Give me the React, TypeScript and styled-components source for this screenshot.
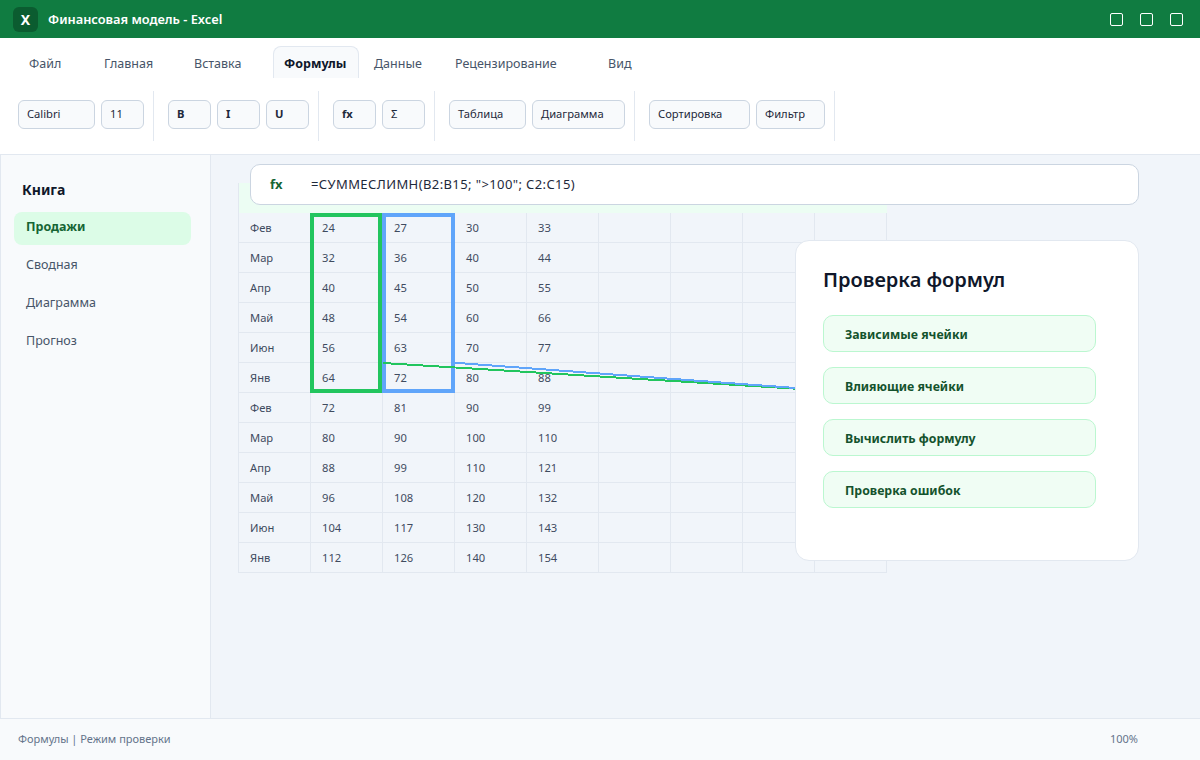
import React from 'react';
import styled, { createGlobalStyle } from 'styled-components';

const GlobalStyle = createGlobalStyle`
  html, body {
    margin: 0;
    padding: 0;
    height: 100%;
    overflow: hidden;
    font-family: "Noto Sans", "Open Sans", sans-serif;
  }
  * { box-sizing: border-box; }
`;

const Window = styled.div`
  width: 1200px;
  height: 760px;
  display: flex;
  flex-direction: column;
  background: #f1f5fa;
`;

const TitleBar = styled.header`
  height: 38px;
  flex: none;
  display: flex;
  align-items: center;
  padding: 0 17px 0 13px;
  background: #107c41;
  color: #fff;
`;

const Logo = styled.div`
  width: 25px;
  height: 25px;
  margin-right: 10px;
  display: flex;
  align-items: center;
  justify-content: center;
  border-radius: 6px;
  background: #0b5c30;
  font-size: 14px;
  font-weight: 700;
`;

const AppTitle = styled.div`
  font-size: 12.8px;
  font-weight: 600;
  flex: 1;
`;

const WindowControls = styled.div`
  display: flex;
  gap: 17px;
`;

const WindowControl = styled.div`
  width: 13px;
  height: 13px;
  border: 1px solid #fff;
  border-radius: 2px;
`;

const TabBar = styled.nav`
  height: 40px;
  flex: none;
  display: flex;
  align-items: flex-end;
  padding-left: 18px;
  background: #fff;
`;

const Tab = styled.div<{ $active?: boolean; $width: number }>`
  width: ${p => p.$width}px;
  height: 32px;
  margin-right: ${p => (p.$active ? 4 : 0)}px;
  padding: 1px 0 0 10px;
  display: flex;
  align-items: center;
  font-size: 12.5px;
  font-weight: ${p => (p.$active ? 700 : 400)};
  color: ${p => (p.$active ? '#0f172a' : '#475569')};
  background: ${p => (p.$active ? '#f8fafc' : 'transparent')};
  border: 1px solid ${p => (p.$active ? '#e2e8f0' : 'transparent')};
  border-bottom: none;
  border-radius: 8px 8px 0 0;
`;

const Ribbon = styled.div`
  height: 77px;
  flex: none;
  display: flex;
  align-items: flex-start;
  padding: 13px 0 0 18px;
  background: #fff;
  border-bottom: 1px solid #e2e8f0;
`;

const RibbonGroup = styled.div`
  height: 50px;
  display: flex;
  align-items: flex-start;
  gap: 6px;
  padding: 9px 9px 0 0;
  margin-right: 14px;
  border-right: 1px solid #e2e8f0;
`;

const RibbonButton = styled.div<{ $width: number; $bold?: boolean }>`
  width: ${p => p.$width}px;
  height: 29px;
  padding: 0 0 3px 8px;
  display: flex;
  align-items: center;
  font-size: 11.2px;
  font-weight: ${p => (p.$bold ? 700 : 400)};
  color: #1e293b;
  background: #f8fafc;
  border: 1px solid #cbd5e1;
  border-radius: 6px;
`;

const Body = styled.div`
  flex: 1;
  min-height: 0;
  display: flex;
`;

const Sidebar = styled.aside`
  width: 211px;
  flex: none;
  padding: 24px 19px 0 13px;
  background: #f8fafc;
  border-left: 1px solid #e2e8f0;
  border-right: 1px solid #e2e8f0;
`;

const SidebarTitle = styled.h2`
  margin: 0 0 12px 8px;
  height: 21px;
  line-height: 21px;
  font-size: 14px;
  font-weight: 700;
  color: #0f172a;
`;

const SidebarList = styled.div`
  display: flex;
  flex-direction: column;
  gap: 5px;
`;

const SidebarItem = styled.div<{ $active?: boolean }>`
  height: 33px;
  padding: 6px 12px 0;
  line-height: 18px;
  font-size: 12.5px;
  font-weight: ${p => (p.$active ? 700 : 400)};
  color: ${p => (p.$active ? '#166534' : '#475569')};
  background: ${p => (p.$active ? '#dcfce7' : 'transparent')};
  border-radius: 8px;
`;

const Main = styled.main`
  flex: 1;
  min-width: 0;
  position: relative;
  padding: 28px 0 0 27px;
  background: #f1f5fa;
`;

const FormulaBar = styled.div`
  position: absolute;
  z-index: 2;
  left: 39px;
  top: 9px;
  width: 889px;
  height: 41px;
  display: flex;
  align-items: center;
  padding: 0 19px 2px;
  background: #fff;
  border: 1px solid #cbd5e1;
  border-radius: 10px;
`;

const FormulaLabel = styled.span`
  width: 41px;
  flex: none;
  font-size: 13px;
  font-weight: 700;
  color: #166534;
`;

const FormulaText = styled.span`
  font-size: 13px;
  letter-spacing: 0.4px;
  color: #1e293b;
`;

const Sheet = styled.div`
  position: relative;
  width: 649px;
  display: grid;
  grid-template-columns: repeat(9, 72px);
  grid-auto-rows: 30px;
  border-left: 1px solid #e2e8f0;
`;

const HeaderCell = styled.div`
  background: #ecfdf3;
`;

const Cell = styled.div`
  display: flex;
  align-items: center;
  padding-left: 11px;
  font-size: 11.2px;
  color: #3f4b5f;
  border-right: 1px solid #e2e8f0;
  border-bottom: 1px solid #e2e8f0;
`;

const Range = styled.div<{ $color: string; $left: number; $width: number }>`
  position: absolute;
  z-index: 1;
  left: ${p => p.$left}px;
  top: 30px;
  width: ${p => p.$width}px;
  height: 180px;
  border: 4px solid ${p => p.$color};
`;

const Connectors = styled.svg`
  position: absolute;
  z-index: 1;
  left: 0;
  top: 0;
  width: 989px;
  height: 563px;
  pointer-events: none;
`;

const CheckPanel = styled.section`
  position: absolute;
  z-index: 2;
  left: 584px;
  top: 85px;
  width: 344px;
  height: 321px;
  padding: 25px 27px;
  background: #fff;
  border: 1px solid #e2e8f0;
  border-radius: 14px;
`;

const PanelTitle = styled.h3`
  margin: 0 0 22px;
  height: 27px;
  line-height: 27px;
  font-size: 20px;
  font-weight: 600;
  color: #0f172a;
`;

const PanelList = styled.div`
  display: flex;
  flex-direction: column;
  gap: 15px;
`;

const PanelButton = styled.div`
  width: 273px;
  height: 37px;
  padding: 1px 0 0 21px;
  display: flex;
  align-items: center;
  font-size: 12.3px;
  font-weight: 700;
  color: #14532d;
  background: #f0fdf4;
  border: 1px solid #bbf7d0;
  border-radius: 10px;
`;

const StatusBar = styled.footer`
  height: 42px;
  flex: none;
  display: flex;
  align-items: center;
  justify-content: space-between;
  padding: 0 62px 3px 18px;
  font-size: 11px;
  color: #64748b;
  background: #f8fafc;
  border-top: 1px solid #e2e8f0;
`;

const tabs = [
  { label: 'Файл', width: 75 },
  { label: 'Главная', width: 90 },
  { label: 'Вставка', width: 90 },
  { label: 'Формулы', width: 86, active: true },
  { label: 'Данные', width: 81 },
  { label: 'Рецензирование', width: 153 },
  { label: 'Вид', width: 44 },
];

const ribbon = [
  [{ label: 'Calibri', width: 77 }, { label: '11', width: 43 }],
  [{ label: 'B', width: 43, bold: true }, { label: 'I', width: 43, bold: true }, { label: 'U', width: 43, bold: true }],
  [{ label: 'fx', width: 43, bold: true }, { label: 'Σ', width: 43 }],
  [{ label: 'Таблица', width: 77 }, { label: 'Диаграмма', width: 93 }],
  [{ label: 'Сортировка', width: 101 }, { label: 'Фильтр', width: 69 }],
];

const months = ['Фев', 'Мар', 'Апр', 'Май', 'Июн', 'Янв', 'Фев', 'Мар', 'Апр', 'Май', 'Июн', 'Янв'];
const sheets = ['Продажи', 'Сводная', 'Диаграмма', 'Прогноз'];
const checks = ['Зависимые ячейки', 'Влияющие ячейки', 'Вычислить формулу', 'Проверка ошибок'];

export default function App() {
  return (
    <Window>
      <GlobalStyle />
      <TitleBar>
        <Logo>X</Logo>
        <AppTitle>Финансовая модель - Excel</AppTitle>
        <WindowControls>
          <WindowControl />
          <WindowControl />
          <WindowControl />
        </WindowControls>
      </TitleBar>
      <TabBar>
        {tabs.map(tab => (
          <Tab key={tab.label} $width={tab.width} $active={tab.active}>{tab.label}</Tab>
        ))}
      </TabBar>
      <Ribbon>
        {ribbon.map((group, i) => (
          <RibbonGroup key={i}>
            {group.map(item => (
              <RibbonButton key={item.label} $width={item.width} $bold={item.bold}>{item.label}</RibbonButton>
            ))}
          </RibbonGroup>
        ))}
      </Ribbon>
      <Body>
        <Sidebar>
          <SidebarTitle>Книга</SidebarTitle>
          <SidebarList>
            {sheets.map((name, i) => (
              <SidebarItem key={name} $active={i === 0}>{name}</SidebarItem>
            ))}
          </SidebarList>
        </Sidebar>
        <Main>
          <FormulaBar>
            <FormulaLabel>fx</FormulaLabel>
            <FormulaText>=СУММЕСЛИМН(B2:B15; "&gt;100"; C2:C15)</FormulaText>
          </FormulaBar>
          <Sheet>
            {Array.from({ length: 9 }, (_, i) => <HeaderCell key={i} />)}
            {months.map((month, r) => {
              const n = r + 3;
              return (
                <React.Fragment key={r}>
                  <Cell>{month}</Cell>
                  <Cell>{n * 8}</Cell>
                  <Cell>{n * 9}</Cell>
                  <Cell>{n * 10}</Cell>
                  <Cell>{n * 11}</Cell>
                  <Cell />
                  <Cell />
                  <Cell />
                  <Cell />
                </React.Fragment>
              );
            })}
            <Range $color="#22c55e" $left={71} $width={72} />
            <Range $color="#60a5fa" $left={143} $width={73} />
          </Sheet>
          <Connectors viewBox="0 0 989 563" shapeRendering="crispEdges">
            <line x1="172" y1="208" x2="590" y2="234" stroke="#22c55e" strokeWidth="2" />
            <line x1="243" y1="207.7" x2="590" y2="233.4" stroke="#60a5fa" strokeWidth="2" />
          </Connectors>
          <CheckPanel>
            <PanelTitle>Проверка формул</PanelTitle>
            <PanelList>
              {checks.map(label => <PanelButton key={label}>{label}</PanelButton>)}
            </PanelList>
          </CheckPanel>
        </Main>
      </Body>
      <StatusBar>
        <span>Формулы | Режим проверки</span>
        <span>100%</span>
      </StatusBar>
    </Window>
  );
}
